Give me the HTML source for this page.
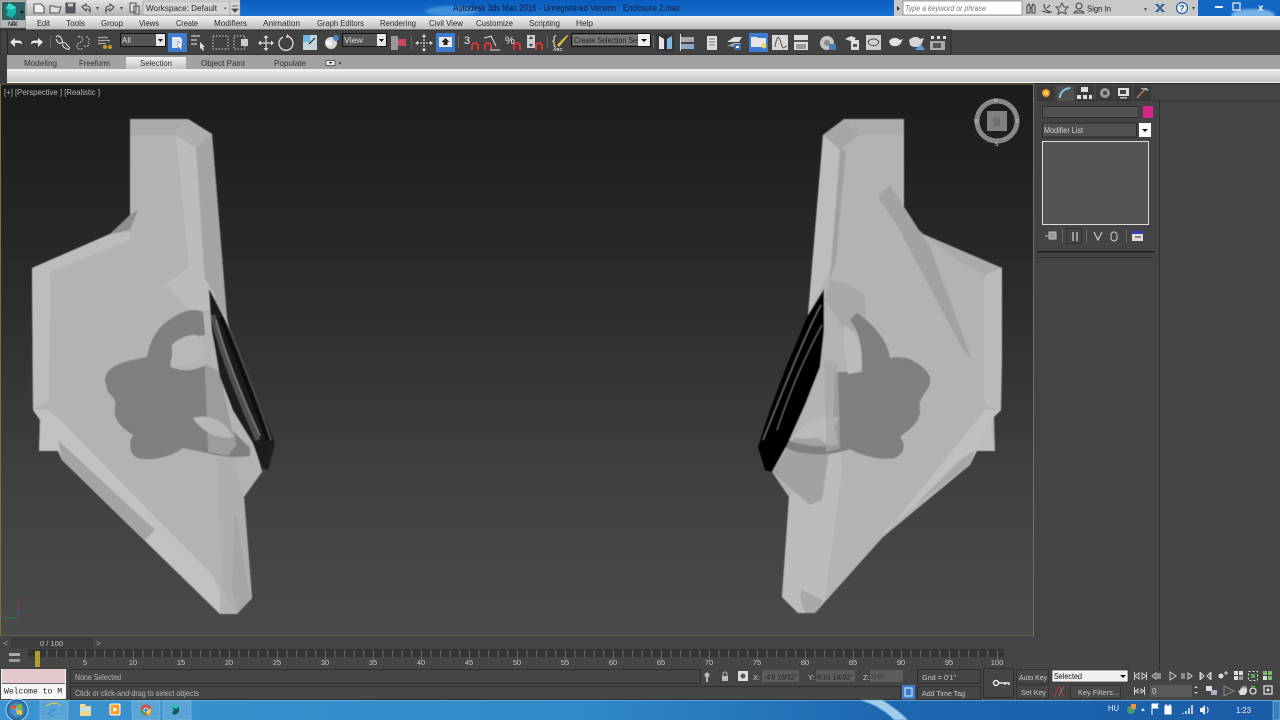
<!DOCTYPE html>
<html><head><meta charset="utf-8"><title>Autodesk 3ds Max 2016</title>
<style>
html,body{margin:0;padding:0;background:#444;width:1280px;height:720px;overflow:hidden}
svg{display:block;filter:blur(.3px)}
text{font-family:"Liberation Sans",sans-serif;font-size:8.5px}
.m{fill:#2a2a2a}.t{fill:#c8c8c8;font-size:7.5px}
</style></head><body>
<svg width="1280" height="720" viewBox="0 0 1280 720" xmlns="http://www.w3.org/2000/svg">
<defs>
<linearGradient id="vp" x1="0" y1="0" x2="0" y2="1"><stop offset="0" stop-color="#1b1b1b"/><stop offset=".35" stop-color="#2a2a2a"/><stop offset=".7" stop-color="#3f3f3f"/><stop offset="1" stop-color="#4b4b4b"/></linearGradient>
<linearGradient id="tb" x1="0" y1="0" x2="0" y2="1"><stop offset="0" stop-color="#0a5cc0"/><stop offset="1" stop-color="#1a73d0"/></linearGradient>
<linearGradient id="menu" x1="0" y1="0" x2="0" y2="1"><stop offset="0" stop-color="#f2f2f2"/><stop offset="1" stop-color="#b9b9b9"/></linearGradient>
<linearGradient id="rib" x1="0" y1="0" x2="0" y2="1"><stop offset="0" stop-color="#f2f2f2"/><stop offset="1" stop-color="#c4c4c4"/></linearGradient>
<linearGradient id="qa" x1="0" y1="0" x2="0" y2="1"><stop offset="0" stop-color="#e2e2e2"/><stop offset="1" stop-color="#b4b4b4"/></linearGradient>
<linearGradient id="task" x1="0" y1="0" x2="1" y2="0"><stop offset="0" stop-color="#3b93cf"/><stop offset=".45" stop-color="#3189c8"/><stop offset=".7" stop-color="#1d66b0"/><stop offset="1" stop-color="#1b5ca6"/></linearGradient>
<radialGradient id="orb"><stop offset="0" stop-color="#7cc4ee"/><stop offset="1" stop-color="#195a94"/></radialGradient>
<filter id="b1"><feGaussianBlur stdDeviation=".6"/></filter>
<filter id="b2"><feGaussianBlur stdDeviation="1"/></filter>
<filter id="b3"><feGaussianBlur stdDeviation="1.500"/></filter>
</defs>

<rect width="1280" height="720" fill="#444"/>

<!-- title bar -->
<rect x="0" y="0" width="1280" height="16" fill="url(#tb)"/>
<rect x="26" y="0" width="214" height="16" fill="url(#qa)"/>
<rect x="143" y="1" width="87" height="14" fill="#d4d4d4" stroke="#999" stroke-width=".6"/>
<text x="146" y="11" fill="#2b2b2b" textLength="71" lengthAdjust="spacingAndGlyphs">Workspace: Default</text>
<text x="224" y="10" fill="#444" style="font-size:6px">▪</text>
<rect x="230" y="1" width="10" height="14" fill="#d8d8d8" stroke="#888" stroke-width=".5"/>
<path d="M232 6h6M232 9l3 3 3-3z" stroke="#444" fill="#444" stroke-width=".8"/>
<g fill="none" stroke="#555" stroke-width="1.100">
<path d="M34 4h7l3 3v6H34z" fill="#eee"/>
<path d="M50 6h4l1 1h6l-2 6H50z" fill="#ddd"/>
<path d="M66 3h9v10H66z" fill="#556"/><rect x="68" y="3.500" width="5" height="3" fill="#ccc" stroke="none"/>
<path d="M82 7l4-3v2c4 0 5 2 4 6-1-3-2-3-4-3v2z" fill="#ccc"/>
<path d="M114 7l-4-3v2c-4 0-5 2-4 6 1-3 2-3 4-3v2z" fill="#ccc"/>
<path d="M130 3h6v9h-6zM134 6h5v8h-5z" fill="#ddd"/>
</g>
<text x="96" y="10" fill="#444" style="font-size:6px">▾</text>
<text x="120" y="10" fill="#444" style="font-size:6px">▾</text>

<ellipse cx="452" cy="11" rx="26" ry="5" fill="#6fb2ec" opacity=".5" filter="url(#b2)"/>
<text x="453" y="11" fill="#061a3c" style="font-size:9px" textLength="163" lengthAdjust="spacingAndGlyphs">Autodesk 3ds Max 2016 - Unregistered Version</text>
<text x="623" y="11" fill="#061a3c" style="font-size:9px" textLength="57" lengthAdjust="spacingAndGlyphs">Enclosure 2.max</text>

<rect x="894" y="0" width="304" height="16" fill="#c8c8c8"/>
<path d="M897 6l3 2.500-3 2.500z" fill="#333"/>
<rect x="903" y="1" width="119" height="14" fill="#fff" stroke="#777" stroke-width=".7"/>
<text x="905" y="11" fill="#777" style="font-size:8px;font-style:italic" textLength="81" lengthAdjust="spacingAndGlyphs">Type a keyword or phrase</text>
<g fill="none" stroke="#444" stroke-width="1.100">
<path d="M1027 13V6l2-2 1 2v7zM1032 13V6l1-2 2 2v7zM1030 8h2"/>
<path d="M1044 4c0 5 3 8 8 8M1042 11l8 2M1047 8l3-3"/>
<path d="M1062 3l2 4h4l-3 3 1 4-4-2-4 2 1-4-3-3h4z" stroke="#555"/>
<circle cx="1079" cy="6" r="3"/><path d="M1074 13c1-3 9-3 10 0z"/>
</g>
<text x="1087" y="11.500" fill="#222" textLength="24" lengthAdjust="spacingAndGlyphs">Sign In</text>
<text x="1144" y="11" fill="#555" style="font-size:6px">▾</text>
<path d="M1155 4l4 4-4 4h3l2-3 2 3h3l-4-4 4-4h-3l-2 3-2-3z" fill="#1c4f9a"/>
<circle cx="1182" cy="8" r="5.500" fill="#e8eef8" stroke="#2c5ba8" stroke-width="1.200"/>
<text x="1179.500" y="11" fill="#1c4f9a" style="font-size:8px;font-weight:bold">?</text>
<text x="1192" y="10" fill="#444" style="font-size:6px">▾</text>
<rect x="1198" y="0" width="82" height="16" fill="#1466c4"/>
<ellipse cx="1253" cy="15" rx="22" ry="6" fill="#9fd2f7" opacity=".7" filter="url(#b2)"/>
<rect x="1215" y="6" width="8" height="2" fill="#eee"/>
<rect x="1233" y="3" width="7" height="7" fill="none" stroke="#e6e6e6" stroke-width="1.300"/>
<text x="1258" y="11" fill="#f2f2f2" style="font-size:10px;font-weight:bold">x</text>

<!-- app button -->
<rect x="0" y="0" width="26" height="28" fill="#b6b6b6" stroke="#555" stroke-width=".5"/>
<rect x="2" y="2" width="23" height="18" fill="#2f5f62"/>
<path d="M9 3l7 4v6l-4 5-6-3 2-4-3-3z" fill="#14b3aa"/><path d="M9 3l7 4-4 3-5-2z" fill="#38d8cc"/>
<path d="M20 11h4l-2 3z" fill="#111"/>
<text x="8" y="26" fill="#222" style="font-size:6.500px" textLength="10">MAX</text>

<!-- menu bar -->
<rect x="26" y="16" width="1254" height="14" fill="url(#menu)"/>
<text class="m" x="37" y="26" textLength="13" lengthAdjust="spacingAndGlyphs">Edit</text>
<text class="m" x="66" y="26" textLength="19" lengthAdjust="spacingAndGlyphs">Tools</text>
<text class="m" x="101" y="26" textLength="22" lengthAdjust="spacingAndGlyphs">Group</text>
<text class="m" x="139" y="26" textLength="20" lengthAdjust="spacingAndGlyphs">Views</text>
<text class="m" x="176" y="26" textLength="22" lengthAdjust="spacingAndGlyphs">Create</text>
<text class="m" x="214" y="26" textLength="33" lengthAdjust="spacingAndGlyphs">Modifiers</text>
<text class="m" x="263" y="26" textLength="37" lengthAdjust="spacingAndGlyphs">Animation</text>
<text class="m" x="317" y="26" textLength="47" lengthAdjust="spacingAndGlyphs">Graph Editors</text>
<text class="m" x="380" y="26" textLength="36" lengthAdjust="spacingAndGlyphs">Rendering</text>
<text class="m" x="429" y="26" textLength="34" lengthAdjust="spacingAndGlyphs">Civil View</text>
<text class="m" x="476" y="26" textLength="37" lengthAdjust="spacingAndGlyphs">Customize</text>
<text class="m" x="529" y="26" textLength="31" lengthAdjust="spacingAndGlyphs">Scripting</text>
<text class="m" x="576" y="26" textLength="17" lengthAdjust="spacingAndGlyphs">Help</text>

<!-- main toolbar -->
<rect x="0" y="30" width="1280" height="25" fill="#454545"/>
<rect x="0" y="30" width="951" height="25" fill="#424242" stroke="#2a2a2a" stroke-width="1"/>
<rect x="7" y="31" width="1" height="23" fill="#222"/>
<path d="M10 42l5-4v2.500h3c3 0 4 1 4 4-1-1-2-1.500-4-1.500h-3V47z" fill="#e6e6e6"/><path d="M43 42l-5-4v2.500h-3c-3 0-4 1-4 4 1-1 2-1.500 4-1.500h3V47z" fill="#e6e6e6"/>
<rect x="50" y="36" width="1" height="12" fill="#666"/>
<g fill="none" stroke="#d4d4d4" stroke-width="1.200"><path d="M56 37c2-2 4-1 5 1l1 2c1 2 0 3-2 3M61 43c-2 1-3 0-4-2l-1-2M62 43c2-1 4 0 5 2l2 2c1 2 0 3-2 2l-2-1c-2-1-3-3-2-4"/></g>
<g fill="none" stroke="#aaa" stroke-width="1.300" stroke-dasharray="2 1"><path d="M78 37c4-2 6 2 4 4s-5 2-5 5 4 4 6 2M86 37c3 0 4 3 2 5M84 46c3 1 5 0 5-3"/></g>
<g fill="none" stroke="#aaa" stroke-width="1.200"><path d="M98 37c3 2 6-1 10 1M98 40c3 2 6-1 12 1M98 43c3 2 6-1 8 1"/></g><circle cx="105" cy="47" r="2" fill="#c89b2b"/><circle cx="110" cy="47" r="2" fill="#c89b2b"/>
<rect x="120.500" y="33.500" width="45" height="13" fill="#555" stroke="#111" stroke-width="1"/>
<rect x="156" y="34" width="9" height="12" fill="#e8e8e8"/><path d="M158 39h5l-2.500 3z" fill="#111"/>
<text x="122" y="43" fill="#ddd" style="font-size:8px">All</text>
<rect x="168" y="33" width="19" height="19" fill="#3d7cd0"/>
<path d="M172 37h8l2 2v9h-10z" fill="#dfe6f0"/><path d="M178 41l5 5-2 0 1 3-1 1-2-3-1 1z" fill="#fff" stroke="#333" stroke-width=".4"/>
<g fill="#999"><rect x="191" y="35" width="9" height="2"/><rect x="191" y="39" width="6" height="2"/><rect x="191" y="43" width="6" height="2"/></g><path d="M200 42l5 5-2 0 1 3-1 1-2-3-1 1z" fill="#ddd"/>
<rect x="213" y="36" width="15" height="13" fill="none" stroke="#ccc" stroke-width="1" stroke-dasharray="1.500 1.500"/>
<rect x="234" y="36" width="11" height="13" fill="none" stroke="#ccc" stroke-width="1" stroke-dasharray="1.500 1.500"/><rect x="241" y="39" width="7" height="7" fill="#ccc"/>
<path d="M266 37v12M260 43h12" stroke="#ddd" stroke-width="1.200"/><path d="M266 35l-2.500 3h5zM266 51l-2.500-3h5zM258 43l3-2.500v5zM274 43l-3-2.500v5z" fill="#ddd"/>
<path d="M283 37a7 7 0 1 0 6 0" fill="none" stroke="#ddd" stroke-width="1.300"/><path d="M287 34l3 3-4 1z" fill="#ddd"/>
<rect x="303" y="35" width="14" height="15" fill="#6bb7e4"/><path d="M303 50v-8h7v-7h7v15z" fill="#ddd" opacity=".8"/><path d="M309 44l6-6" stroke="#222" stroke-width="1.200"/>
<circle cx="331" cy="43" r="6" fill="#d8d8d8"/><circle cx="329" cy="43" r="3" fill="#f4f4f4"/><circle cx="336" cy="38" r="3" fill="#4b84c6"/>
<rect x="342.500" y="33.500" width="44" height="13" fill="#555" stroke="#111" stroke-width="1"/>
<rect x="377" y="34" width="9" height="12" fill="#e8e8e8"/><path d="M379 39h5l-2.500 3z" fill="#111"/>
<text x="344" y="43" fill="#ddd" style="font-size:8px" textLength="19" lengthAdjust="spacingAndGlyphs">View</text>
<rect x="391" y="36" width="7" height="14" fill="#999"/><rect x="398" y="39" width="8" height="7" fill="#c9495b"/>
<rect x="411" y="36" width="1" height="13" fill="#666"/>
<path d="M424 36v14M417 43h14" stroke="#ccc" stroke-width="1.300" stroke-dasharray="2 1"/><path d="M424 34l-2 3h4zM424 52l-2-3h4zM415 43l3-2v4zM433 43l-3-2v4z" fill="#ddd"/>
<rect x="436" y="33" width="19" height="19" fill="#3d7cd0"/><rect x="439" y="37" width="13" height="10" fill="#e8e8e8"/><path d="M445.500 38l4 4h-2v3h-4v-3h-2z" fill="#222"/>
<rect x="458" y="36" width="1" height="12" fill="#666"/>
<text x="464" y="44" fill="#eee" style="font-size:11px">3</text>
<path d="M472 50v-4a3 3 0 0 1 6 0v4" fill="none" stroke="#d33" stroke-width="2"/>
<path d="M485 50v-4a3 3 0 0 1 6 0v4" fill="none" stroke="#d33" stroke-width="2"/>
<path d="M491 36l5 10M484 38l8-2M490 50h10" fill="none" stroke="#ddd" stroke-width="1"/>
<text x="505" y="44" fill="#eee" style="font-size:11px">%</text>
<path d="M514 50v-4a3 3 0 0 1 6 0v4" fill="none" stroke="#d33" stroke-width="2"/>
<rect x="527" y="35" width="8" height="13" fill="#ccc"/><path d="M531 36l-2 3h4zM531 47l-2-3h4z" fill="#333"/>
<path d="M536 50v-4a3 3 0 0 1 6 0v4" fill="none" stroke="#d33" stroke-width="2"/>
<rect x="547" y="36" width="1" height="12" fill="#666"/>
<text x="552" y="45" fill="#ddd" style="font-size:13px">{</text>
<path d="M557 45l10-10 1 1-9 11z" fill="#e0c33a"/>
<text x="553" y="51" fill="#ddd" style="font-size:4.500px;font-weight:bold">ABC</text>
<rect x="571.500" y="33.500" width="79" height="13" fill="#555" stroke="#111" stroke-width="1"/>
<rect x="573" y="35" width="64" height="10" fill="#777"/>
<rect x="638" y="34" width="12" height="12" fill="#efefef"/><path d="M641 39h6l-3 3z" fill="#111"/>
<text x="574" y="43" fill="#222" style="font-size:8px" textLength="63" lengthAdjust="spacingAndGlyphs">Create Selection Se</text>
<rect x="653" y="36" width="1" height="12" fill="#666"/>
<rect x="656" y="33" width="19" height="19" fill="#383838"/>
<path d="M659 36l5 3v10h-5z" fill="#e4e4e4"/><path d="M672 36l-5 3v10h5z" fill="#7db8e0"/><path d="M665.500 34v17" stroke="#222"/>
<path d="M680.500 34v17" stroke="#ddd" stroke-width="1"/><rect x="681" y="37" width="13" height="5" fill="#aaa"/><rect x="681" y="44" width="13" height="5" fill="#8fa8c8"/>
<rect x="707" y="36" width="10" height="14" fill="#ddd"/><path d="M709 39h6M709 42h6M709 45h6" stroke="#777"/>
<path d="M727 42l7-5h8l-3 5z" fill="#ddd"/><path d="M727 46l7-3h7l-3 4z" fill="#aaa"/><rect x="734" y="44" width="7" height="6" fill="#3a6fb4"/><rect x="736" y="46" width="3" height="2" fill="#fff"/>
<rect x="749" y="33" width="19" height="19" fill="#3d7cd0"/><path d="M751 37h6l1 1h8v9h-15z" fill="#e6e6e6"/><circle cx="764" cy="46" r="2.500" fill="#f2d64b"/>
<rect x="772" y="35" width="16" height="15" fill="#d8d8d8"/><path d="M775 47c2-12 4-12 6-4s3 4 6 3" fill="none" stroke="#555"/>
<rect x="794" y="35" width="14" height="15" fill="#dcdcdc"/><rect x="794" y="40" width="14" height="2" fill="#555"/><rect x="796" y="44" width="10" height="5" fill="#999"/>
<circle cx="827" cy="43" r="7" fill="#c4c4c4"/><circle cx="827" cy="43" r="3" fill="#8a8a8a"/><rect x="829" y="44" width="7" height="6" fill="#4c7cb4"/>
<path d="M845 39l6-3 5 2-3 4z" fill="#ddd"/><rect x="851" y="40" width="8" height="10" fill="#ddd"/><rect x="853" y="44" width="4" height="3" fill="#555"/>
<rect x="866" y="35" width="15" height="15" fill="#cfcfcf"/><path d="M868 42c2-4 9-4 11 0-2 5-9 5-11 0z" fill="none" stroke="#444"/>
<path d="M889 41c3-4 8-4 11-1l3-1-2 4c-2 4-9 4-11 1z" fill="#e2e2e2"/>
<path d="M909 40c4-4 9-4 11-1l4-1-2 5c-1 5-9 5-12 2z" fill="#d6d6d6"/><path d="M915 50l6-6 4 6z" fill="#5aa0d8"/>
<rect x="931" y="36" width="3" height="3" fill="#ddd"/><rect x="937" y="36" width="3" height="3" fill="#ddd"/><rect x="943" y="36" width="3" height="3" fill="#ddd"/><rect x="930" y="41" width="15" height="9" fill="#aaa"/><rect x="933" y="43" width="8" height="5" fill="#555"/>

<!-- ribbon -->
<rect x="0" y="55" width="8" height="29" fill="#3c3c3c"/>
<rect x="7" y="55" width="1273" height="14" fill="#a2a2a2"/>
<rect x="126" y="57" width="60" height="12" fill="url(#rib)"/>
<text x="24" y="66" fill="#333" textLength="33" lengthAdjust="spacingAndGlyphs">Modeling</text>
<text x="79" y="66" fill="#333" textLength="31" lengthAdjust="spacingAndGlyphs">Freeform</text>
<text x="140" y="66" fill="#333" textLength="32" lengthAdjust="spacingAndGlyphs">Selection</text>
<text x="201" y="66" fill="#333" textLength="44" lengthAdjust="spacingAndGlyphs">Object Paint</text>
<text x="274" y="66" fill="#333" textLength="32" lengthAdjust="spacingAndGlyphs">Populate</text>
<rect x="326" y="60.500" width="9" height="5" fill="#eee" stroke="#333" stroke-width=".7"/><path d="M328.500 62h4l-2 2z" fill="#222"/><path d="M338.500 62.500h3l-1.500 2z" fill="#222"/>
<rect x="7" y="69" width="1273" height="13" fill="url(#rib)"/>
<rect x="7" y="82" width="1273" height="1" fill="#fbfbf4"/>
<rect x="0" y="83" width="1280" height="1" fill="#222"/>

<!-- viewport -->
<rect x="1" y="84.500" width="1032" height="551" fill="url(#vp)"/>
<rect x="0.500" y="84" width="1033" height="552" fill="none" stroke="#7a7245" stroke-width="1"/>
<text x="4" y="95" fill="#b8b8b8" textLength="96" lengthAdjust="spacingAndGlyphs">[+] [Perspective ] [Realistic ]</text>

<!-- LEFT MODEL -->
<g filter="url(#b1)">
<path d="M130 119H188L212 134 227 318 262 472 244 497 252 598 237 614H220L62 460 58 451H39L40 420 33 410 32 268 110 234 130 215Z" fill="#b3b3b3"/>
<path d="M130 119H188L175 135H130Z" fill="#aaa"/>
<path d="M188 119L212 134 196 148 176 135Z" fill="#aeaeae"/>
<path d="M196 148L212 134 227 318 205 285Z" fill="#a4a4a4"/>
<path d="M176 135L196 148 205 285 200 300 190 280Z" fill="#bcbcbc"/>
<path d="M130 215L138 210 130 230 110 234Z" fill="#8f8f8f"/>
<path d="M32 268L110 234 130 232 130 240 50 272 49 400 33 410Z" fill="#bdbdbd"/>
<path d="M33 410L48 410 60 420 212 575 220 590 220 614 62 460 58 451H39L40 420Z" fill="#c2c2c2"/>
<path d="M58 440L62 460 145 540 155 530Z" fill="#a4a4a4"/>
<path d="M215 390L244 497 252 598 237 614 222 590Z" fill="#aeaeae"/>
<path d="M235 510L250 598 238 612 232 590Z" fill="#a6a6a6"/>
<path d="M165 285L195 262 215 295 215 310 190 310Z" fill="#bcbcbc"/>
</g>
<g filter="url(#b1)">
<path d="M105 380C106 368 118 362 147 357C150 340 158 326 172 318C185 310 195 308 203 312L205 335C190 336 172 344 170 366C180 372 190 372 207 365L220 372 232 430 250 448 250 456C235 458 222 457 207 453L183 448C170 458 150 461 138 458C130 455 128 445 133 435C122 428 113 420 115 408C117 400 112 396 108 392Z" fill="#7f7f7f"/>
<path d="M193 418C205 414 225 418 233 437C218 440 202 432 193 418Z" fill="#b8b8b8"/>
<path d="M172 345C178 338 190 334 197 335L205 345 200 362 172 368Z" fill="#b8b8b8"/>
<path d="M204 340L222 340 236 445 228 456 208 452Z" fill="#b4b4b4" opacity=".55"/>
<!-- ring -->
<path d="M209 289L212 330 220 377 233 410 253 443 262 468 268 470 275 443 262 410 247 370 225 320Z" fill="#1c1c1c"/>
<path d="M213 315C220 350 238 395 258 440" fill="none" stroke="#4f4f4f" stroke-width="5"/>
<path d="M216 320C224 350 240 392 260 436" fill="none" stroke="#7d7d7d" stroke-width="1.500"/>
<path d="M221 318C232 345 250 390 268 440" fill="none" stroke="#0c0c0c" stroke-width="4"/>
<path d="M230 330C242 360 258 400 271 440" fill="none" stroke="#4a4a4a" stroke-width="2"/>
</g>

<!-- RIGHT MODEL -->
<g filter="url(#b1)">
<path d="M844 119H904V215L923 234 1002 268V360L1001 410 994 417 995 451H975L970 465 883 537 815 613H798L782 597 789 497 772 472 808 315 823 135Z" fill="#b3b3b3"/>
<path d="M844 119H904V135H859Z" fill="#acacac"/>
<path d="M844 119L859 135 840 150 823 135Z" fill="#a6a6a6"/>
<path d="M823 135L840 150 832 265 808 315Z" fill="#bdbdbd"/>
<path d="M840 150L846 150 836 260 830 280Z" fill="#a0a0a0"/>
<path d="M904 215L923 234 912 224 904 232Z" fill="#8f8f8f"/>
<path d="M878 197L890 185 930 247 972 360 963 350 897 225Z" fill="#a2a2a2"/>
<path d="M923 234L1002 268 985 275 960 262Z" fill="#aaa"/>
<path d="M985 275L1002 268 1001 410 985 405Z" fill="#bbb"/>
<path d="M1001 410L994 417 970 465 960 470 885 530 883 537 985 410Z" fill="#c0c0c0"/>
<path d="M990 420L995 451H975Z" fill="#bdbdbd"/>
<path d="M975 450L970 465 915 505 960 460Z" fill="#a8a8a8"/>
<path d="M830 280L850 285 865 295 866 330 845 330 825 300Z" fill="#a8a8a8"/>
<path d="M815 480L835 380 842 470 825 600 815 613H798L782 597 789 497Z" fill="#bcbcbc"/>
<path d="M772 472L810 505 822 500 830 445 800 430Z" fill="#a2a2a2"/>
<path d="M800 597L805 613 815 613 823 600 802 590Z" fill="#a8a8a8"/>
<!-- blob -->
<path d="M857 313C875 325 888 342 890 358C900 356 910 358 915 362C926 368 932 376 930 384C926 394 918 398 920 410C920 424 908 430 900 437C906 444 905 453 895 458C880 461 860 455 850 449C830 457 800 456 785 447L788 440C805 447 825 448 838 444L833 420 835 372 862 372C863 345 858 330 850 320Z" fill="#7f7f7f"/>
<path d="M845 325C858 335 864 352 860 372L848 374 843 340Z" fill="#bcbcbc"/>
<path d="M840 418C826 414 808 420 793 437C815 442 830 436 840 418Z" fill="#bbb"/>
<path d="M824 360L838 365 840 448 826 452 826 420Z" fill="#a6a6a6" opacity=".7"/>
<!-- ring -->
<path d="M824 289L808 315 785 370 770 410 758 447 765 470 772 472 787 445 805 405 820 367 824 330Z" fill="#060606"/>
<path d="M821 305C805 335 785 385 763 440" fill="none" stroke="#6a6a6a" stroke-width="1.200"/>
<path d="M822 325C806 355 792 385 777 430" fill="none" stroke="#666" stroke-width="1"/>
</g>

<path d="M18 599v18" stroke="#a33" stroke-width="1.200" stroke-dasharray="2 1"/>
<path d="M4 618h14" stroke="#3a7a3a" stroke-width="1"/>
<path d="M18 610v8" stroke="#4a4aa8" stroke-width="1"/>

<!-- viewcube -->
<circle cx="997" cy="121" r="20" fill="none" stroke="#878787" stroke-width="5"/>
<rect x="987" y="111" width="20" height="20" fill="#808080"/>
<rect x="993" y="117" width="7" height="9" fill="#6f6f6f"/>
<text x="994" y="102" fill="#ccc" style="font-size:5px">N</text>
<text x="974" y="123" fill="#ccc" style="font-size:5px">W</text>
<text x="1016" y="123" fill="#ccc" style="font-size:5px">E</text>
<text x="995" y="146" fill="#ddd" style="font-size:5px">S</text>

<!-- command panel -->
<rect x="1034" y="84" width="246" height="552" fill="#444"/>
<rect x="1159" y="100" width="1" height="570" fill="#2e2e2e"/>
<rect x="1160" y="100" width="120" height="2" fill="#3a3a3a"/>
<rect x="1036" y="100" width="123" height="1" fill="#333"/>
<rect x="1037" y="86" width="18" height="14" fill="#3a3a3a"/><circle cx="1046" cy="93" r="4" fill="#e59a25"/><circle cx="1046" cy="93" r="2" fill="#ffd76b"/>
<rect x="1057" y="86" width="17" height="15" fill="#505050"/><path d="M1060 98c0-6 4-9 10-10" fill="none" stroke="#7fc0e8" stroke-width="2"/>
<rect x="1076" y="86" width="17" height="14" fill="#3a3a3a"/><rect x="1081" y="87" width="7" height="5" fill="#ddd"/><rect x="1077" y="95" width="4" height="4" fill="#ddd"/><rect x="1083" y="95" width="4" height="4" fill="#ddd"/><rect x="1089" y="95" width="3" height="4" fill="#ddd"/>
<rect x="1096" y="86" width="17" height="14" fill="#3a3a3a"/><circle cx="1105" cy="93" r="5" fill="#999"/><circle cx="1105" cy="93" r="2" fill="#444"/>
<rect x="1115" y="86" width="17" height="14" fill="#3a3a3a"/><rect x="1118" y="88" width="11" height="8" fill="#ddd"/><rect x="1120" y="90" width="6" height="4" fill="#444"/><rect x="1120" y="97" width="7" height="1.500" fill="#bbb"/>
<rect x="1134" y="86" width="17" height="14" fill="#3a3a3a"/><path d="M1137 98l7-8" stroke="#9c6a5a" stroke-width="2"/><path d="M1140 88l7 0 2 3-5-1z" fill="#aaa"/>
<rect x="1042.500" y="106.500" width="96" height="11" fill="#505050" stroke="#333"/>
<rect x="1143" y="106" width="10" height="12" fill="#d6248a"/>
<rect x="1042.500" y="123" width="94" height="14" fill="#505050" stroke="#2a2a2a"/>
<rect x="1139" y="123" width="12" height="14" fill="#fbfbfb"/><path d="M1142 129h6l-3 3z" fill="#111"/>
<text x="1044" y="133" fill="#cfcfcf" textLength="39" lengthAdjust="spacingAndGlyphs">Modifier List</text>
<rect x="1042.500" y="141.500" width="106" height="83" fill="#545454" stroke="#dcdcdc" stroke-width="1"/>
<path d="M1045 236h4M1049 232h7v7h-7z" stroke="#bbb" fill="#999"/>
<rect x="1062" y="229" width="1" height="14" fill="#666"/>
<rect x="1066.500" y="228.500" width="15" height="15" fill="none" stroke="#333"/>
<path d="M1073 232v9M1077 232v9" stroke="#ccc" stroke-width="1.300"/>
<rect x="1086" y="229" width="1" height="14" fill="#666"/>
<path d="M1094 232l4 8 4-8" stroke="#ccc" fill="none" stroke-width="1.200"/>
<rect x="1111" y="232" width="6" height="9" rx="3" fill="none" stroke="#ccc"/>
<rect x="1126" y="229" width="1" height="14" fill="#666"/>
<rect x="1132" y="231" width="11" height="10" fill="#dcdcdc"/><rect x="1132" y="231" width="11" height="3" fill="#3b3bb4"/><path d="M1135 237h6" stroke="#333"/>
<rect x="1037" y="251" width="118" height="1.500" fill="#1f1f1f"/>
<rect x="1037" y="257" width="117" height="1" fill="#333"/>

<!-- time slider -->
<rect x="0" y="636" width="1280" height="64" fill="#454545"/>
<rect x="11" y="637" width="82" height="11" fill="#3c3c3c"/>
<text x="3" y="646" fill="#aaa">&lt;</text>
<text x="96" y="646" fill="#aaa">&gt;</text>
<text class="t" x="40" y="646" textLength="23" lengthAdjust="spacingAndGlyphs">0 / 100</text>
<rect x="9" y="653" width="11" height="3" fill="#aaa"/><rect x="9" y="659" width="11" height="3" fill="#999"/>
<rect x="1159" y="636" width="1" height="34" fill="#2e2e2e"/>
<rect x="28" y="649" width="976" height="8" fill="#343434"/>
<rect x="35" y="651" width="5" height="16" fill="#b39b2c"/>
<path d="M47 650v7M56.600 650v7M66.200 650v7M75.800 650v7M85.400 650v10M95 650v7M104.600 650v7M114.200 650v7M123.800 650v7M133.400 650v10M143 650v7M152.600 650v7M162.200 650v7M171.800 650v7M181.400 650v10M191 650v7M200.600 650v7M210.200 650v7M219.800 650v7M229.400 650v10M239 650v7M248.600 650v7M258.200 650v7M267.800 650v7M277.400 650v10M287 650v7M296.600 650v7M306.200 650v7M315.800 650v7M325.400 650v10M335 650v7M344.600 650v7M354.200 650v7M363.800 650v7M373.400 650v10M383 650v7M392.600 650v7M402.200 650v7M411.800 650v7M421.400 650v10M431 650v7M440.600 650v7M450.200 650v7M459.800 650v7M469.400 650v10M479 650v7M488.600 650v7M498.200 650v7M507.800 650v7M517.400 650v10M527 650v7M536.600 650v7M546.200 650v7M555.800 650v7M565.400 650v10M575 650v7M584.600 650v7M594.200 650v7M603.800 650v7M613.400 650v10M623 650v7M632.600 650v7M642.200 650v7M651.800 650v7M661.400 650v10M671 650v7M680.600 650v7M690.200 650v7M699.800 650v7M709.400 650v10M719 650v7M728.600 650v7M738.200 650v7M747.800 650v7M757.400 650v10M767 650v7M776.600 650v7M786.200 650v7M795.800 650v7M805.400 650v10M815 650v7M824.600 650v7M834.200 650v7M843.800 650v7M853.400 650v10M863 650v7M872.600 650v7M882.200 650v7M891.800 650v7M901.400 650v10M911 650v7M920.600 650v7M930.200 650v7M939.800 650v7M949.400 650v10M959 650v7M968.600 650v7M978.200 650v7M987.800 650v7M997.400 650v10" stroke="#6a6a6a" stroke-width="1"/>
<text class="t" x="85" y="665" text-anchor="middle">5</text><text class="t" x="133" y="665" text-anchor="middle">10</text><text class="t" x="181" y="665" text-anchor="middle">15</text><text class="t" x="229" y="665" text-anchor="middle">20</text><text class="t" x="277" y="665" text-anchor="middle">25</text><text class="t" x="325" y="665" text-anchor="middle">30</text><text class="t" x="373" y="665" text-anchor="middle">35</text><text class="t" x="421" y="665" text-anchor="middle">40</text><text class="t" x="469" y="665" text-anchor="middle">45</text><text class="t" x="517" y="665" text-anchor="middle">50</text><text class="t" x="565" y="665" text-anchor="middle">55</text><text class="t" x="613" y="665" text-anchor="middle">60</text><text class="t" x="661" y="665" text-anchor="middle">65</text><text class="t" x="709" y="665" text-anchor="middle">70</text><text class="t" x="757" y="665" text-anchor="middle">75</text><text class="t" x="805" y="665" text-anchor="middle">80</text><text class="t" x="853" y="665" text-anchor="middle">85</text><text class="t" x="901" y="665" text-anchor="middle">90</text><text class="t" x="949" y="665" text-anchor="middle">95</text><text class="t" x="997" y="665" text-anchor="middle">100</text>

<!-- status -->
<rect x="1" y="669" width="65" height="30" fill="#f6f6f6"/>
<rect x="2" y="669" width="63" height="14" fill="#e2c9cb"/>
<rect x="2" y="683" width="63" height="1" fill="#666"/>
<text x="4" y="693.500" fill="#222" style="font-family:'Liberation Mono',monospace;font-size:8px" textLength="58">Welcome to M</text>
<rect x="70.500" y="669.500" width="630" height="14" fill="#454545" stroke="#2e2e2e"/>
<rect x="70.500" y="686.500" width="830" height="13" fill="#454545" stroke="#2e2e2e"/>
<text x="75" y="680" fill="#b8b8b8" textLength="46" lengthAdjust="spacingAndGlyphs">None Selected</text>
<text x="75" y="696" fill="#b8b8b8" textLength="124" lengthAdjust="spacingAndGlyphs">Click or click-and-drag to select objects</text>
<circle cx="707" cy="675" r="2.500" fill="#bbb"/><rect x="706" y="677" width="2" height="5" fill="#bbb"/>
<rect x="722" y="676" width="6" height="5" fill="#bbb"/><path d="M723 676v-2a2 2 0 0 1 4 0v2" fill="none" stroke="#bbb"/>
<rect x="738" y="671" width="10" height="10" fill="#dcdcdc"/><circle cx="743" cy="676" r="2.500" fill="#555"/>
<text class="t" x="753" y="680">X:</text>
<rect x="762" y="670" width="37" height="12" fill="#5c5c5c"/><text x="764" y="679.500" fill="#222" style="font-size:7.500px" textLength="33" lengthAdjust="spacingAndGlyphs">-4'9 16/32"</text>
<text class="t" x="808" y="680">Y:</text>
<rect x="816" y="670" width="39" height="12" fill="#5c5c5c"/><text x="817" y="679.500" fill="#222" style="font-size:7.500px" textLength="36" lengthAdjust="spacingAndGlyphs">6'10 14/32"</text>
<text class="t" x="863" y="680">Z:</text>
<rect x="870" y="670" width="33" height="12" fill="#5c5c5c"/><text x="872" y="679.500" fill="#333" style="font-size:7.500px">0'0"</text>
<rect x="902" y="685" width="13" height="14" fill="#3d7cd0"/><rect x="905" y="688" width="7" height="8" fill="none" stroke="#eee"/>
<rect x="917.500" y="669.500" width="63" height="14" fill="#454545" stroke="#2e2e2e"/>
<rect x="917.500" y="686.500" width="63" height="13" fill="#454545" stroke="#2e2e2e"/>
<text class="t" x="922" y="680" textLength="34" lengthAdjust="spacingAndGlyphs">Grid = 0'1"</text>
<text class="t" x="922" y="696" textLength="43" lengthAdjust="spacingAndGlyphs">Add Time Tag</text>
<rect x="983.500" y="668.500" width="30" height="29" fill="#454545" stroke="#2e2e2e"/>
<circle cx="996" cy="683" r="2.500" fill="none" stroke="#eee" stroke-width="1.400"/><path d="M998 683h11v2M1005 683v2" fill="none" stroke="#eee" stroke-width="1.400"/>
<rect x="1016.500" y="669.500" width="32" height="14" fill="#484848" stroke="#333"/>
<rect x="1016.500" y="685.500" width="32" height="13" fill="#484848" stroke="#333"/>
<text class="t" x="1019" y="680" textLength="28" lengthAdjust="spacingAndGlyphs">Auto Key</text>
<text class="t" x="1021" y="695" textLength="25" lengthAdjust="spacingAndGlyphs">Set Key</text>
<rect x="1052" y="670" width="76" height="12" fill="#efefef" stroke="#222" stroke-width=".6"/>
<text x="1054" y="679" fill="#111" textLength="28" lengthAdjust="spacingAndGlyphs">Selected</text>
<path d="M1120 675h6l-3 3z" fill="#111"/>
<path d="M1054 696c2 0 3-9 5-9s3 9 5 9" fill="none" stroke="#c33" stroke-width="1"/><path d="M1059 696c1-3 3-7 5-9" fill="none" stroke="#889" stroke-width=".8"/>
<rect x="1070.500" y="685.500" width="50" height="13" fill="#4a4a4a" stroke="#333"/>
<text class="t" x="1078" y="695" textLength="41" lengthAdjust="spacingAndGlyphs">Key Filters...</text>
<g stroke="#cfcfcf" fill="none" stroke-width="1">
<path d="M1134.500 672v8M1146.500 672v8M1135 676l4-3v6zM1146 676l-4-3v6z"/>
<path d="M1152 676l4-3v6zM1158 673v6M1160 673v6"/>
<path d="M1170 672l6 4-6 4z"/>
<path d="M1182 673v6M1184 673v6M1192 676l-4-3v6z"/>
<path d="M1200 672v8M1211 672v8M1204 676l-3-3v6zM1207 676l3-3v6z"/>
<path d="M1134.500 687v8M1144.500 687v8M1135 691l3-2v4zM1144 691l-3-2v4z"/>
</g>
<rect x="1150" y="685" width="42" height="12" fill="#5a5a5a"/>
<text x="1152" y="694" fill="#ccc" style="font-size:8px">0</text>
<path d="M1194 688l2-2 2 2zM1194 692l2 2 2-2z" fill="#ccc"/>
<g fill="#ddd">
<circle cx="1221" cy="676" r="2.500"/><path d="M1226 671v4M1224 673h4" stroke="#ddd"/>
<rect x="1234" y="671" width="4" height="4"/><rect x="1239" y="671" width="4" height="4"/><rect x="1234" y="676" width="4" height="4"/><rect x="1239" y="676" width="4" height="4" fill="#999"/>
<rect x="1248.500" y="671.500" width="9" height="9" fill="none" stroke="#ddd" stroke-dasharray="2 2"/><rect x="1251" y="674" width="4" height="4" fill="#5aa84e"/>
<rect x="1263" y="671" width="4" height="4" fill="#7dbb66"/><rect x="1268" y="671" width="4" height="4" fill="#7dbb66"/><rect x="1263" y="676" width="4" height="4"/><rect x="1268" y="676" width="4" height="4" fill="#7dbb66"/>
<rect x="1206" y="686" width="6" height="5"/><rect x="1211" y="690" width="6" height="5" fill="#aac"/>
<path d="M1224 686l10 5-10 5z" fill="none" stroke="#888"/>
<path d="M1238 690l2 5h5l2-3 0-6-1 3-1-4-1 4-1-4-1 4-1-2-1 4z"/>
<circle cx="1253" cy="691" r="3" fill="none" stroke="#ddd" stroke-width="1.300"/><rect x="1251" y="686" width="4" height="2" fill="#5aa84e"/>
<rect x="1264" y="686" width="8" height="8" fill="none" stroke="#ddd" stroke-width="1.300"/><circle cx="1268" cy="690" r="1.500"/>
</g>

<!-- taskbar -->
<rect x="0" y="700" width="1280" height="20" fill="url(#task)"/>
<rect x="0" y="700" width="1280" height="1" fill="#72b6e0" opacity=".7"/>
<path d="M860 700h22c10 6 18 12 26 20h-14c-8-9-20-16-34-20z" fill="#b8def5" opacity=".85" filter="url(#b1)"/>
<circle cx="17" cy="710" r="11" fill="url(#orb)" stroke="#a8d4ee" stroke-width="1"/>
<path d="M11 706l5-1v4h-5z" fill="#e8582f"/><path d="M17 705l5-1v5h-5z" fill="#7ebd3a"/><path d="M11 710h5v4l-5-1z" fill="#3f8ed8"/><path d="M17 710h5v5l-5-1z" fill="#f5c12d"/>
<rect x="40" y="701" width="28" height="19" fill="#5aa4d6" stroke="#8fc6e8" stroke-width=".5"/>
<text x="48" y="716" fill="#2f93d8" style="font-family:'Liberation Serif',serif;font-size:17px;font-style:italic">e</text>
<path d="M46 706c5-4 14-3 14 0" fill="none" stroke="#f2c84a" stroke-width="1"/>
<path d="M80 704h5l1 2h5v10H80z" fill="#efd98c"/><rect x="80" y="708" width="11" height="3" fill="#bfe2f2"/>
<rect x="110" y="704" width="10" height="11" rx="1.500" fill="#f4a12c" stroke="#fff" stroke-width="1"/><path d="M113.500 707l4 2.500-4 2.500z" fill="#fff"/>
<rect x="132" y="701" width="28" height="19" fill="#5aa4d6" stroke="#8fc6e8" stroke-width=".5"/>
<circle cx="146" cy="710" r="5.500" fill="#d94a3c"/><path d="M146 710l-5-1a5.500 5.500 0 0 0 4 6.500z" fill="#3ea64e"/><path d="M146 710l1 5.500a5.500 5.500 0 0 0 4-7z" fill="#f2c531"/><circle cx="146" cy="710" r="2.200" fill="#4689e8" stroke="#fff" stroke-width=".7"/>
<rect x="163" y="701" width="28" height="19" fill="#5aa4d6" stroke="#8fc6e8" stroke-width=".5"/>
<path d="M173 704l6 3v5l-4 3-3-2 2-3-2-3z" fill="#0f5a58"/><path d="M173 704l6 3-3 2-4-2z" fill="#23c4b8"/>
<text x="1108" y="711" fill="#e8f2fa" textLength="11" lengthAdjust="spacingAndGlyphs">HU</text>
<circle cx="1131" cy="710" r="4" fill="#4b9a6a"/><rect x="1131" y="704" width="5" height="5" fill="#e8933a"/>
<path d="M1141 711l2-3 2 3z" fill="#e8f2fa"/>
<path d="M1152 704v11M1152 704h6l-1 2 1 2h-6" stroke="#fff" fill="#fff" stroke-width="1"/>
<path d="M1165 706v8h6v-8zM1166 704v2M1170 704v2" stroke="#fff" fill="#fff" stroke-width="1"/>
<path d="M1183 713v1M1186 711v3M1189 708v6M1192 705v9" stroke="#f2f2f2" stroke-width="1.500"/>
<path d="M1200 708h2l3-3v10l-3-3h-2z" fill="#eee"/><path d="M1207 707c1.500 2 1.500 4 0 6" fill="none" stroke="#eee"/>
<text x="1236" y="713" fill="#f2f2f2" textLength="15" lengthAdjust="spacingAndGlyphs">1:23</text>
<rect x="1273" y="701" width="7" height="19" fill="#3a7fc0" stroke="#86bae0" stroke-width=".7"/>
</svg>
</body></html>
